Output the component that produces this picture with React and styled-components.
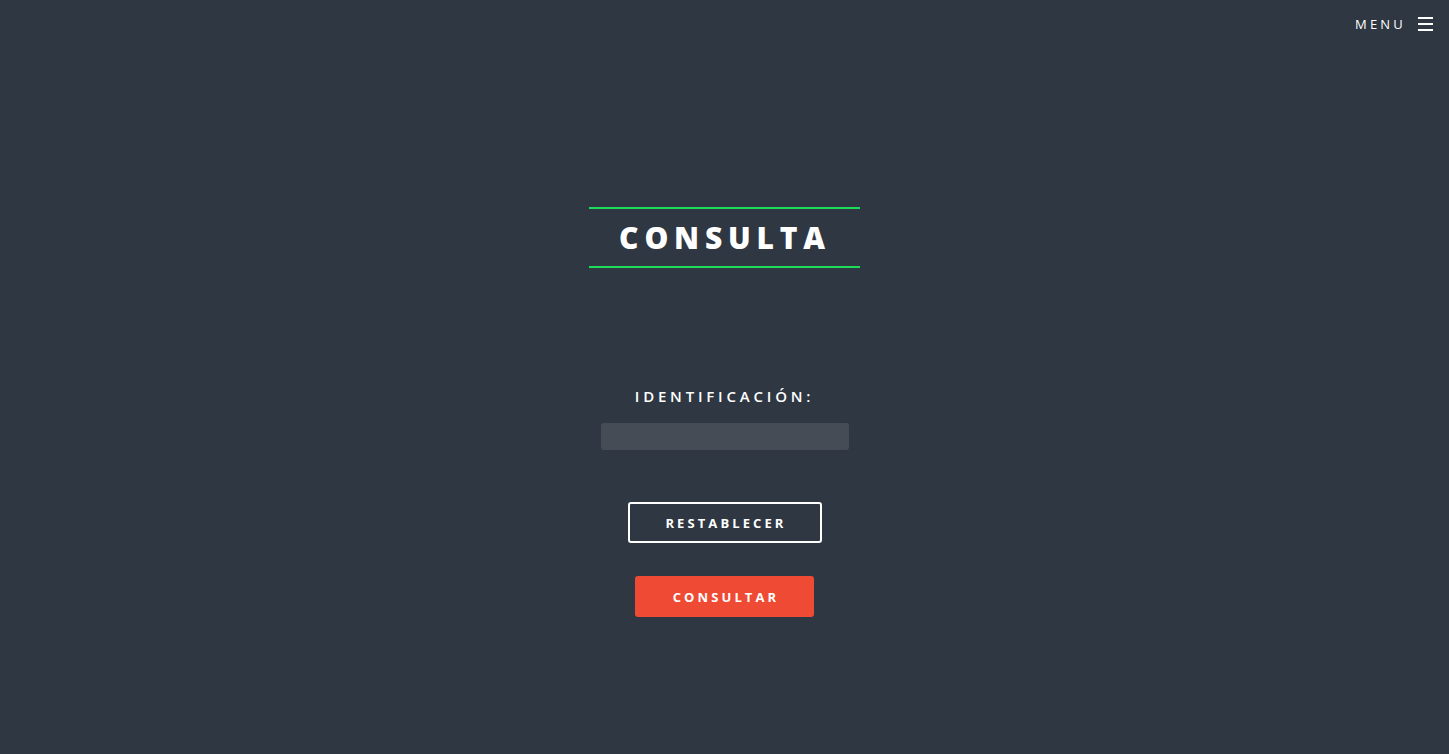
import React from "react";
import styled, { createGlobalStyle } from "styled-components";

const Global = createGlobalStyle`
  html, body { margin: 0; padding: 0; background: #2e3742; }
  body { font-family: "Open Sans", "Liberation Sans", sans-serif; color: #fff; }
  * { box-sizing: border-box; }
`;

const Page = styled.div`
  min-height: 754px;
  background: #2e3742;
  display: flex;
  flex-direction: column;
  align-items: center;
`;

const Header = styled.header`
  align-self: stretch;
  display: flex;
  justify-content: flex-end;
  padding: 15px 16px 0 0;
  height: 207px;
`;

const MenuButton = styled.button`
  display: flex;
  align-items: center;
  gap: 12px;
  height: 18px;
  background: none;
  border: 0;
  padding: 0;
  color: #fff;
  font-family: "Open Sans", "Liberation Sans", sans-serif;
  font-size: 13px;
  letter-spacing: 3.2px;
  cursor: pointer;
`;

const Burger = styled.span`
  display: flex;
  flex-direction: column;
  gap: 4px;
  width: 15px;
  span { display: block; height: 2px; background: #fff; }
`;

const Title = styled.h1`
  margin: 0;
  width: 271px;
  border-top: 2px solid #1ddc5a;
  border-bottom: 2px solid #1ddc5a;
  height: 61px;
  display: flex;
  align-items: center;
  justify-content: center;
  padding-left: 1px;
  font-size: 30px;
  font-weight: 800;
  letter-spacing: 5.8px;
  line-height: 1;
`;

const Form = styled.form`
  display: flex;
  flex-direction: column;
  align-items: center;
  margin-top: 118px;
`;

const Label = styled.label`
  font-size: 15px;
  font-weight: 600;
  letter-spacing: 3.8px;
  padding-left: 0;
  line-height: 20px;
`;

const Input = styled.input`
  margin-top: 17px;
  width: 248px;
  height: 27px;
  border: 0;
  border-radius: 3px;
  background: #464c55;
  outline: none;
  color: #fff;
`;

const Button = styled.button`
  height: 41px;
  border-radius: 3px;
  font-family: "Open Sans", "Liberation Sans", sans-serif;
  font-size: 13px;
  font-weight: 700;
  letter-spacing: 3.1px;
  color: #fff;
  cursor: pointer;
  padding: 0 0 0 3px;
  width: ${(p) => p.$w}px;
  margin-top: ${(p) => p.$mt}px;
  background: ${(p) => (p.$primary ? "#ef4a34" : "transparent")};
  border: ${(p) => (p.$primary ? "0" : "2px solid #fff")};
`;

export default function App() {
  return (
    <Page>
      <Global />
      <Header>
        <MenuButton type="button">
          MENU
          <Burger>
            <span />
            <span />
            <span />
          </Burger>
        </MenuButton>
      </Header>
      <Title>CONSULTA</Title>
      <Form onSubmit={(e) => e.preventDefault()}>
        <Label>IDENTIFICACIÓN:</Label>
        <Input type="text" />
        <Button type="reset" $w={194} $mt={52}>RESTABLECER</Button>
        <Button type="submit" $primary $w={179} $mt={33}>CONSULTAR</Button>
      </Form>
    </Page>
  );
}
